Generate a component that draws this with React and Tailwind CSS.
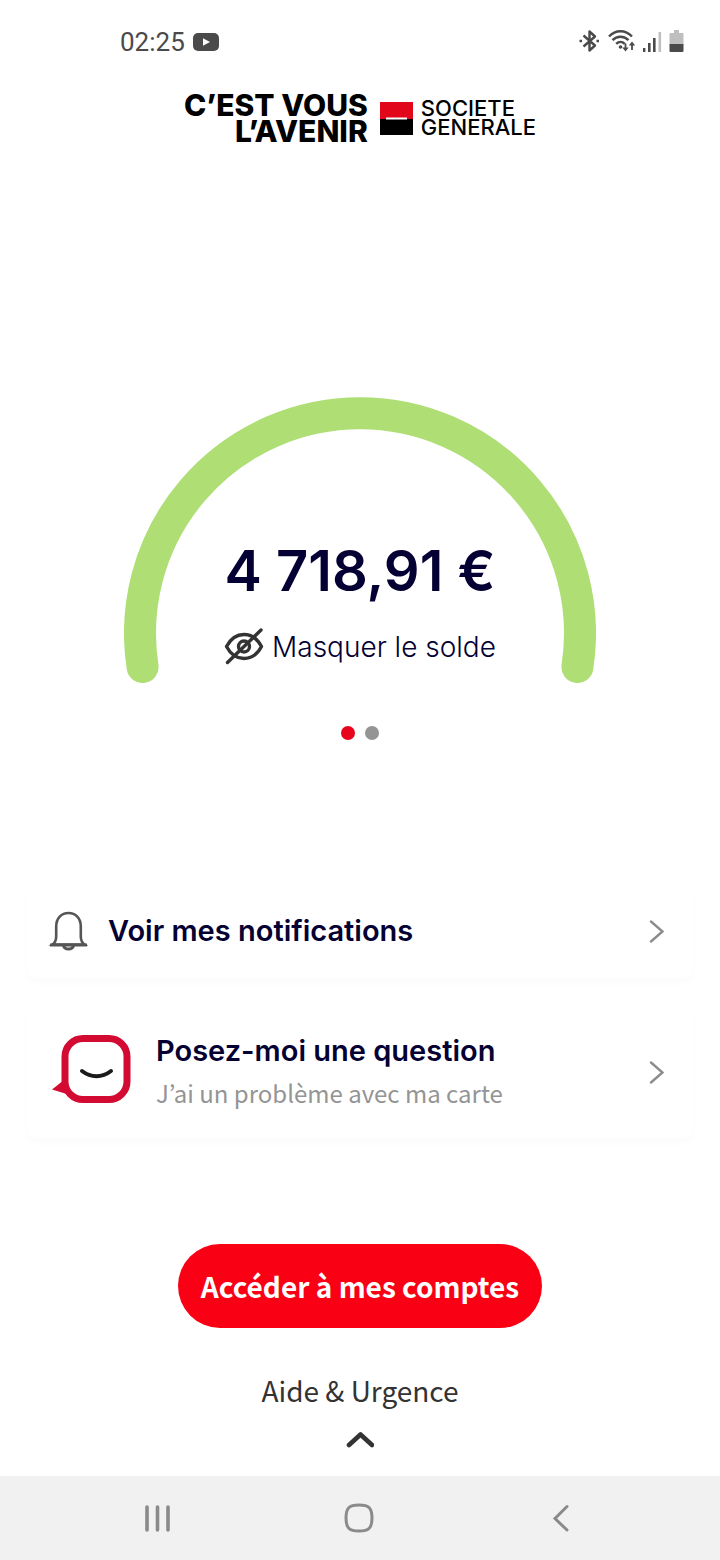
import { useState } from 'react';

const slides = ['Compte courant', 'Épargne'];

function StatusBar() {
  return (
    <div className="flex h-21 items-center justify-between pl-30 pr-9 text-[#4a4a4a]">
      <div className="flex items-center gap-2">
        <span className="font-['Roboto',sans-serif] text-[26px] leading-8">02:25</span>
        <svg width="26" height="18" viewBox="0 0 26 18">
          <rect width="26" height="18" rx="5" fill="#4a4a4a" />
          <path d="M10 5.2v7.6L17 9z" fill="#fff" />
        </svg>
      </div>
      <div className="flex items-center gap-[7px]">
        <svg width="22" height="24" viewBox="0 0 22 24" fill="none" stroke="#4a4a4a" strokeWidth="2.4">
          <path d="M5.500 5.500 17 15.500 11.500 20.500V1.500L17 6.500 5.500 16.500" strokeLinejoin="round" />
          <path d="M1.500 11h2.500M18.500 11H21" strokeWidth="2.600" />
        </svg>
        <svg width="28" height="24" viewBox="0 0 28 24" fill="none" stroke="#4a4a4a" strokeWidth="2.4">
          <path d="M2 6.500C8.500-.5 18.500-.5 25 6.500M5.500 10.200c4.500-4.600 11.500-4.600 16 0M9.200 13.800c2.600-2.600 6-2.600 8.600 0" />
          <circle cx="13.5" cy="17" r="1.800" fill="#4a4a4a" stroke="none" />
          <path d="M18.500 13.500v6.500M25 20v-6.500" strokeWidth="1.800" />
          <path d="M15.300 17.500h6.400L18.500 21.500zM21.800 15.500h6.400L25 11.500z" fill="#4a4a4a" stroke="none" />
        </svg>
        <svg width="20" height="24" viewBox="0 0 20 24">
          <path d="M1 18h2.400v4H1zM6 13h2.600v9H6zM11 8h2.600v14H11z" fill="#4a4a4a" />
          <path d="M16.500 2h2.600v20h-2.600z" fill="#bfbfbf" />
        </svg>
        <svg width="15" height="24" viewBox="0 0 15 24">
          <path d="M5 0h5v3h3.500q1 0 1 1v11H.5V4q0-1 1-1H5z" fill="#bfbfbf" />
          <path d="M.5 14h14v7q0 1-1 1h-12q-1 0-1-1z" fill="#4a4a4a" />
        </svg>
      </div>
    </div>
  );
}

function Brand() {
  return (
    <header className="flex items-center justify-center gap-3 pt-2 font-['Inter',sans-serif] text-black">
      <p className="text-right text-[30px] font-extrabold leading-[26px]">
        C’EST VOUS
        <br />
        L’AVENIR
      </p>
      <div className="flex items-center gap-2">
        <svg width="33" height="33" viewBox="0 0 33 33">
          <rect width="33" height="17" fill="#e2061a" />
          <rect y="17" width="33" height="16" fill="#000" />
          <rect x="6" y="15.500" width="21" height="2" fill="#fff" />
        </svg>
        <p className="text-[22px] font-medium leading-[19px]">
          SOCIETE
          <br />
          GENERALE
        </p>
      </div>
    </header>
  );
}

function Balance({ hidden, onToggle }) {
  return (
    <section className="mx-auto grid w-fit justify-items-center">
      <svg className="col-start-1 row-start-1" width="472" height="286" viewBox="0 0 472 286" fill="none">
        <path
          d="M18.600 270A220 220 0 1 1 453.400 270"
          stroke="#aede74"
          strokeWidth="32"
          strokeLinecap="round"
        />
      </svg>
      <div className="col-start-1 row-start-1 flex flex-col items-center self-end pb-3 font-['Inter',sans-serif] text-[#050033]">
        <p className="text-[56px] font-semibold leading-16">{hidden ? '•••• €' : '4 718,91 €'}</p>
        <button type="button" onClick={onToggle} className="mt-5 flex items-center gap-2 text-[28px] font-light leading-12">
          <svg width="40" height="38" viewBox="0 0 40 38" fill="none" stroke="#333" strokeWidth="3.400">
            <path d="M2.500 18.500C11 2.500 29 2.500 37.500 18.500 29 34.500 11 34.500 2.500 18.500z" strokeLinejoin="round" />
            <circle cx="20" cy="18.500" r="5.500" />
            <path d="M3.500 34.500 37 2" strokeLinecap="round" />
          </svg>
          Masquer le solde
        </button>
      </div>
    </section>
  );
}

function ChevronRight() {
  return (
    <svg width="16" height="24" viewBox="0 0 16 24" fill="none" stroke="#8c8c8c" strokeWidth="2.400" strokeLinecap="round">
      <path d="M3 2.500 14.500 12.500 3 22.500" />
    </svg>
  );
}

const cardClass =
  'flex items-center rounded-md bg-white pr-7 text-left shadow-[0_4px_10px_rgba(0,0,0,0.02)]';

export default function App() {
  const [hidden, setHidden] = useState(false);
  const [slide, setSlide] = useState(0);

  return (
    <div className="flex min-h-screen flex-col bg-white">
      <StatusBar />
      <Brand />

      <main className="flex flex-1 flex-col pt-[253px]">
        <Balance hidden={hidden} onToggle={() => setHidden(!hidden)} />

        <div className="mt-[43px] flex justify-center gap-[10px]">
          {slides.map((name, i) => (
            <button
              key={name}
              type="button"
              aria-label={name}
              onClick={() => setSlide(i)}
              className={`size-[14px] rounded-full ${i === slide ? 'bg-[#e9041e]' : 'bg-[#949494]'}`}
            />
          ))}
        </div>

        <div className="mx-7 mt-36 flex flex-col gap-7">
          <button type="button" className={`${cardClass} h-[94px] pl-5`}>
            <svg width="40" height="40" viewBox="0 0 40 40" fill="none" stroke="#555" strokeWidth="2.600">
              <path d="M4.500 33.500h32c-2.700-2-3.700-4.500-3.700-8V15.500C32.800 7 27.500 2 20.500 2S8.200 7 8.200 15.500v10c0 3.500-1 6-3.700 8z" />
              <path d="M2 34h37" strokeWidth="3" />
              <path d="M15.500 34.500c.5 2.500 2 3.600 5 3.600s4.500-1.100 5-3.600" strokeWidth="3" />
            </svg>
            <span className="ml-5 flex-1 font-['Inter',sans-serif] text-[29px] font-semibold leading-8 text-[#050033]">
              Voir mes notifications
            </span>
            <ChevronRight />
          </button>

          <button type="button" className={`${cardClass} h-33 pl-6`}>
            <svg width="80" height="76" viewBox="0 0 80 76" fill="none">
              <path d="M0 55.500 12 46 18 61z" fill="#d30a32" />
              <rect x="13" y="4.500" width="62" height="61" rx="18" fill="#fff" stroke="#d30a32" strokeWidth="7" />
              <path d="M30 37c9 7 20 7 29 0" stroke="#1a1a1a" strokeWidth="4" strokeLinecap="round" />
            </svg>
            <span className="ml-6 flex-1">
              <span className="block font-['Inter',sans-serif] text-[29px] font-semibold leading-[42px] text-[#050033]">
                Posez-moi une question
              </span>
              <span className="block font-['Noto_Sans_CJK_KR',sans-serif] text-2xl leading-[42px] text-[#949494]">
                J’ai un problème avec ma carte
              </span>
            </span>
            <ChevronRight />
          </button>
        </div>

        <div className="mt-[106px] flex flex-col items-center font-['Noto_Sans_CJK_KR',sans-serif]">
          <button type="button" className="h-21 rounded-full bg-[#fa0014] px-[23px] text-[28px] leading-10 font-bold text-white">
            Accéder à mes comptes
          </button>
          <button type="button" className="mt-[42px] flex flex-col items-center gap-5 text-[28px] leading-10 text-[#333]">
            Aide &amp; Urgence
            <svg width="28" height="18" viewBox="0 0 28 18" fill="none" stroke="#333" strokeWidth="4.600">
              <path d="M3 15 14.500 4.500 26 15" strokeLinecap="round" strokeLinejoin="round" />
            </svg>
          </button>
        </div>
      </main>

      <nav className="flex h-21 items-center justify-between bg-[#f1f1f1] pl-36 pr-[150px]">
        <button type="button" aria-label="Applications récentes">
          <svg width="28" height="28" viewBox="0 0 28 28" stroke="#8a8a8a" strokeWidth="3.600" strokeLinecap="round">
            <path d="M3 3v23M13.500 3v23M24 3v23" />
          </svg>
        </button>
        <button type="button" aria-label="Accueil">
          <svg width="30" height="30" viewBox="0 0 30 30" fill="none" stroke="#8a8a8a" strokeWidth="3">
            <path d="M15 2C25 2 28 5 28 15S25 28 15 28 2 25 2 15 5 2 15 2z" />
          </svg>
        </button>
        <button type="button" aria-label="Retour">
          <svg width="24" height="28" viewBox="0 0 24 28" fill="none" stroke="#8a8a8a" strokeWidth="3" strokeLinecap="round">
            <path d="M21 2.500 9 14.500 21 26" />
          </svg>
        </button>
      </nav>
    </div>
  );
}
